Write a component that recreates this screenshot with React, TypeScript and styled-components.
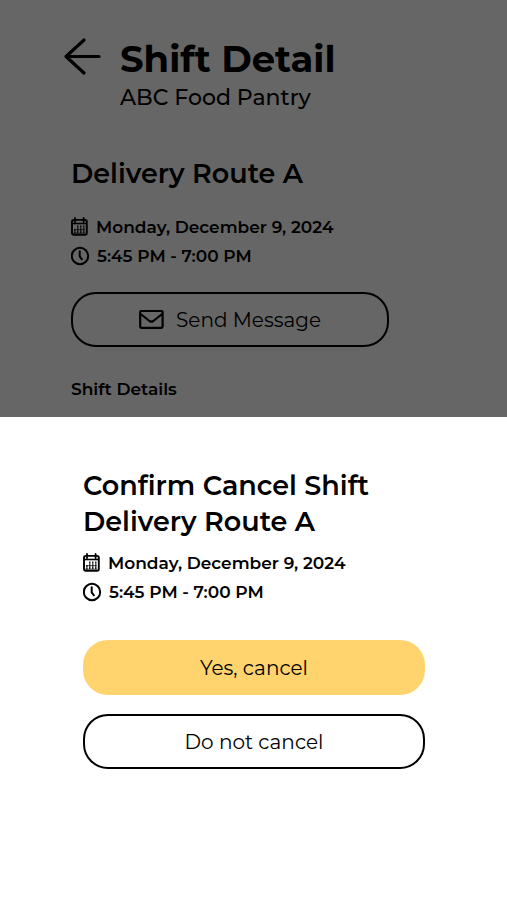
import React from "react";
import styled, { createGlobalStyle } from "styled-components";

const GlobalStyle = createGlobalStyle`
  *, *::before, *::after { box-sizing: border-box; }
  body {
    margin: 0;
    background: #ffffff;
    color: #000000;
    font-family: Montserrat, Inter, sans-serif;
  }
  h1, h2, p { margin: 0; }
  button { font-family: inherit; color: inherit; cursor: pointer; }
`;

const Page = styled.main`
  min-height: 100vh;
  padding: 36px 118px 0 71px;
`;

const Header = styled.header`
  display: flex;
  align-items: flex-start;
  gap: 18px;
  margin-left: -8px;
  white-space: nowrap;
`;

const BackButton = styled.button`
  display: flex;
  padding: 0;
  border: 0;
  background: none;
`;

const Title = styled.h1`
  font-size: 37px;
  line-height: 46px;
  font-weight: 700;
`;

const Subtitle = styled.p`
  font-size: 22px;
  line-height: 32px;
  font-weight: 500;
`;

const RouteTitle = styled.h2`
  margin-top: 42px;
  font-size: 27px;
  line-height: 36px;
  font-weight: 600;
`;

const Facts = styled.div<{ $gap: number }>`
  display: flex;
  flex-direction: column;
  margin-top: ${({ $gap }) => $gap}px;
`;

const Fact = styled.p`
  display: flex;
  align-items: center;
  gap: 7px;
  font-size: 17px;
  line-height: 29px;
  font-weight: 600;
  white-space: nowrap;
`;

const PillButton = styled.button<{ $filled?: boolean }>`
  display: flex;
  align-items: center;
  justify-content: center;
  gap: 12px;
  width: 100%;
  height: 55px;
  border: 2px solid ${({ $filled }) => ($filled ? "#ffd46e" : "#000000")};
  border-radius: 25px;
  background: ${({ $filled }) => ($filled ? "#ffd46e" : "transparent")};
  font-size: 20px;
  line-height: 26px;
  font-weight: 400;
`;

const MessageRow = styled.div`
  margin-top: 21px;
`;

const SectionLabel = styled.h2`
  margin-top: 30px;
  font-size: 17px;
  line-height: 24px;
  font-weight: 600;
`;

const Backdrop = styled.div`
  position: fixed;
  inset: 0;
  display: flex;
  align-items: flex-end;
  background: rgba(0, 0, 0, 0.6);
`;

const Sheet = styled.section`
  width: 100%;
  padding: 51px 82px 131px 83px;
  background: #ffffff;
`;

const SheetTitle = styled.h2`
  font-size: 27px;
  line-height: 36px;
  font-weight: 600;
  white-space: nowrap;
`;

const Actions = styled.div`
  display: flex;
  flex-direction: column;
  gap: 19px;
  margin-top: 33px;
`;

const BackIcon = () => (
  <svg width="39" height="42" viewBox="0 0 39 42" fill="none" stroke="currentColor" strokeWidth="3.2" strokeLinecap="round" strokeLinejoin="round" aria-hidden="true">
    <path d="M36 20.5H3M21 4L3 20.5L21 37" />
  </svg>
);

const CalendarIcon = () => (
  <svg width="18" height="22" viewBox="0 0 18 22" fill="none" stroke="currentColor" aria-hidden="true">
    <rect x="1" y="2.9" width="14.8" height="14.9" rx="1.8" strokeWidth="1.9" />
    <path d="M1.2 6.5H15.6" strokeWidth="1.6" />
    <path d="M4 1V5M12.6 1V5" strokeWidth="1.8" strokeLinecap="round" />
    <path d="M6.8 8.6V16.4M9.8 8.6V16.4M12.8 8.6V16.4M3.9 12V16.4" strokeWidth="1.3" strokeDasharray="2.2 0.4" />
    <path d="M3.2 12.7H13.6M2.2 16.2H14.2" strokeWidth="0.7" />
  </svg>
);

const ClockIcon = () => (
  <svg width="19" height="22" viewBox="0 0 19 22" fill="none" stroke="currentColor" strokeWidth="2" strokeLinecap="round" strokeLinejoin="round" aria-hidden="true">
    <circle cx="9" cy="10" r="8.2" />
    <path d="M8.7 5.3V10.3L10.9 13.3" />
  </svg>
);

const MailIcon = () => (
  <svg width="25" height="20" viewBox="0 0 25 20" fill="none" stroke="currentColor" strokeWidth="2.2" strokeLinejoin="round" aria-hidden="true">
    <rect x="1.2" y="1" width="22.4" height="16.8" rx="1.2" />
    <path d="M1.6 4L10.5 11Q12.4 12.4 14.3 11L23.2 4" />
  </svg>
);

const ShiftFacts = ({ gap }: { gap: number }) => (
  <Facts $gap={gap}>
    <Fact>
      <CalendarIcon />
      Monday, December 9, 2024
    </Fact>
    <Fact>
      <ClockIcon />
      5:45 PM - 7:00 PM
    </Fact>
  </Facts>
);

export default function App() {
  return (
    <>
      <GlobalStyle />
      <Page>
        <Header>
          <BackButton aria-label="Back">
            <BackIcon />
          </BackButton>
          <div>
            <Title>Shift Detail</Title>
            <Subtitle>ABC Food Pantry</Subtitle>
          </div>
        </Header>
        <RouteTitle>Delivery Route A</RouteTitle>
        <ShiftFacts gap={21} />
        <MessageRow>
          <PillButton>
            <MailIcon />
            Send Message
          </PillButton>
        </MessageRow>
        <SectionLabel>Shift Details</SectionLabel>
      </Page>
      <Backdrop>
        <Sheet role="dialog" aria-modal="true" aria-labelledby="confirm-title">
          <SheetTitle id="confirm-title">
            Confirm Cancel Shift
            <br />
            Delivery Route A
          </SheetTitle>
          <ShiftFacts gap={9} />
          <Actions>
            <PillButton $filled>Yes, cancel</PillButton>
            <PillButton>Do not cancel</PillButton>
          </Actions>
        </Sheet>
      </Backdrop>
    </>
  );
}
